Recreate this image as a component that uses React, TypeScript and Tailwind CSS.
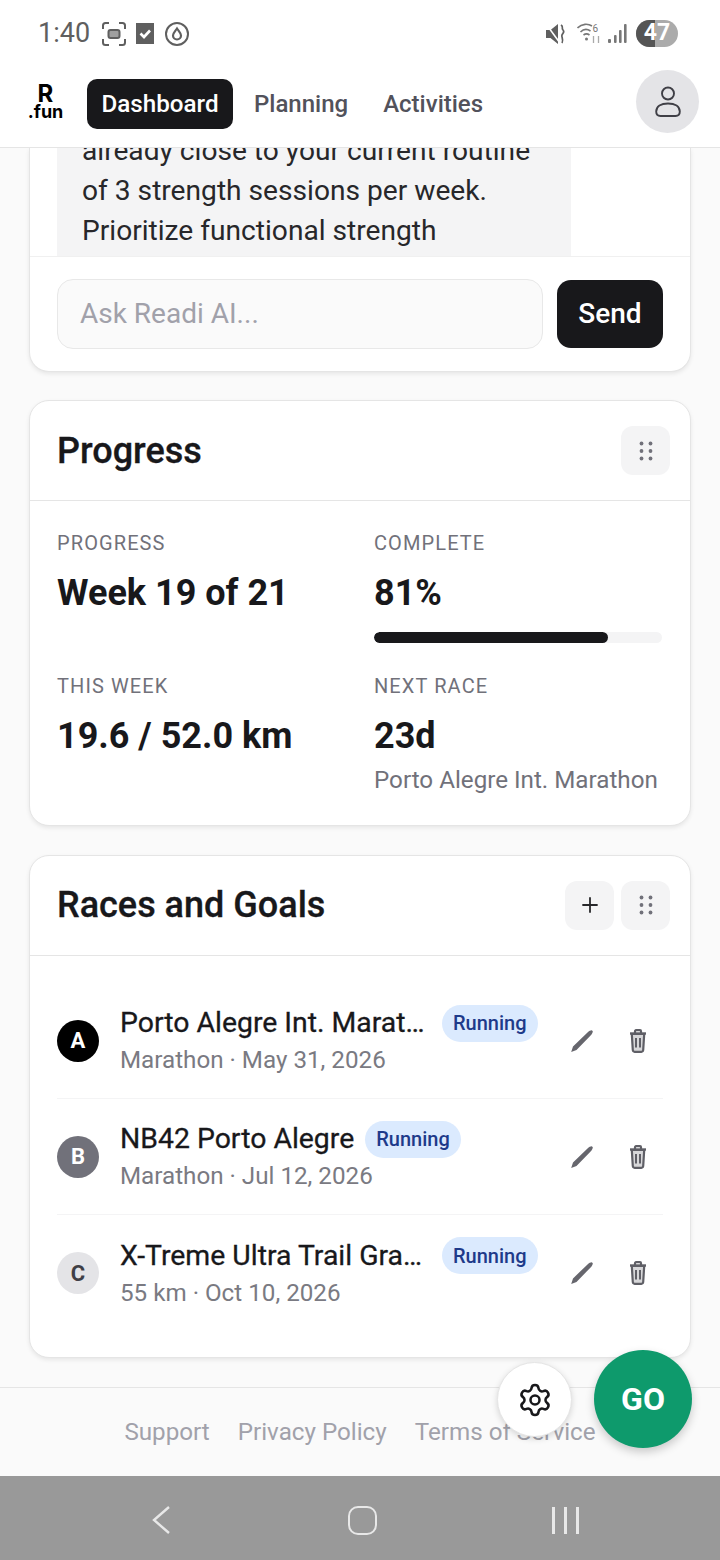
import React from "react";
import { Settings, Plus } from "lucide-react";

function Grip() {
  return (
    <svg width="14" height="20" viewBox="0 0 14 20" className="text-[#71717a]" fill="currentColor">
      <circle cx="2.5" cy="2.5" r="1.9" /><circle cx="11.5" cy="2.5" r="1.9" />
      <circle cx="2.5" cy="10" r="1.9" /><circle cx="11.5" cy="10" r="1.9" />
      <circle cx="2.5" cy="17.5" r="1.9" /><circle cx="11.5" cy="17.5" r="1.9" />
    </svg>
  );
}

function IconBox({ children }: { children: React.ReactNode }) {
  return <div className="w-[49px] h-[49px] rounded-[12px] bg-[#f4f4f5] flex items-center justify-center">{children}</div>;
}

function Pencil() {
  return (
    <svg width="24" height="24" viewBox="0 0 24 24" className="text-[#66666d]" fill="currentColor">
      <path d="M1.2 23 L3 17.5 L17.5 3.4 C19 2 20.5 1.2 21.8 1.2 L22.8 2.2 C22.8 3.6 22 5 20.6 6.4 L6.5 21 Z" />
    </svg>
  );
}

function Trash() {
  return (
    <svg width="18" height="24" viewBox="0 0 18 24" className="text-[#5f5f66]" fill="none" stroke="currentColor" strokeWidth="2.2">
      <path d="M1 4.5 H17" strokeWidth="2.4" />
      <path d="M6 4 V2.2 C6 1.6 6.5 1.2 7 1.2 H11 C11.5 1.2 12 1.6 12 2.2 V4" />
      <path d="M2.8 5 L3.8 21 C3.9 22 4.6 22.8 5.6 22.8 H12.4 C13.4 22.8 14.1 22 14.2 21 L15.2 5 Z" fill="currentColor" fillOpacity="0.25" />
      <path d="M7 9 V18.5 M11 9 V18.5" strokeWidth="2" />
    </svg>
  );
}

function Stat({ label, value, sub, bar }: { label: string; value: string; sub?: string; bar?: boolean }) {
  return (
    <div className="flex flex-col">
      <div className="text-[20px] leading-[28px] tracking-[1.1px] text-[#71717a]">{label}</div>
      <div className="mt-[11px] text-[36px] leading-[50px] font-bold text-[#18181b]">{value}</div>
      {bar && (
        <div className="mt-[14px] h-[11px] w-[288px] rounded-full bg-[#f4f4f5] overflow-hidden">
          <div className="h-full w-[234px] rounded-full bg-[#18181b]" />
        </div>
      )}
      {sub && <div className="mt-[3px] text-[24.2px] leading-[32px] text-[#71717a] whitespace-nowrap">{sub}</div>}
    </div>
  );
}

function Race({ letter, circle, name, sub, last }: { letter: string; circle: string; name: string; sub: string; last?: boolean }) {
  return (
    <div className={"h-[116px] flex items-center " + (last ? "" : "border-b border-[#f4f4f5]")}>
      <div className={"w-[42px] h-[42px] rounded-full flex items-center justify-center text-[22px] font-bold shrink-0 " + circle}>{letter}</div>
      <div className="ml-[21px] flex-1 min-w-0">
        <div className="flex items-center">
          <div className="max-w-[311px] text-[28.4px] leading-[38px] font-normal [-webkit-text-stroke:0.3px_#18181b] text-[#18181b] truncate">{name}</div>
          <div className="ml-[11px] h-[37px] px-[11px] rounded-full bg-[#dbeafe] text-[#1e3a8a] text-[20px] font-medium flex items-center shrink-0">Running</div>
        </div>
        <div className="mt-[1px] text-[24.2px] leading-[34px] text-[#7a7a82]">{sub}</div>
      </div>
      <div className="w-[24px] flex justify-center shrink-0 mr-[32px]"><Pencil /></div>
      <div className="w-[24px] flex justify-center shrink-0 mr-[13px]"><Trash /></div>
    </div>
  );
}

export default function App() {
  return (
    <div className="relative w-[720px] h-[1560px] overflow-hidden flex flex-col bg-[#fafafa] font-['Roboto',sans-serif]">
      {/* status bar */}
      <div className="h-[70px] shrink-0 bg-white flex items-start justify-between pt-[20px] pl-[38px] pr-[42px]">
        <div className="flex items-center h-[27px] text-[#5f5f5f]">
          <div className="text-[27px] leading-[27px] w-[64px]">1:40</div>
          <svg width="24" height="24" viewBox="0 0 24 24" fill="none" stroke="currentColor" strokeWidth="2">
            <path d="M1 7V3.5C1 2 2 1 3.5 1H7M17 1h3.5C22 1 23 2 23 3.5V7M23 17v3.5c0 1.5-1 2.5-2.5 2.5H17M7 23H3.5C2 23 1 22 1 20.5V17" />
            <rect x="6.5" y="8" width="11" height="8" rx="2" fill="currentColor" fillOpacity="0.6" />
          </svg>
          <svg className="ml-[10px]" width="18" height="22" viewBox="0 0 18 22">
            <rect width="18" height="21" fill="currentColor" />
            <path d="M4.5 10.5 L8 14 L14 7.5" stroke="#fff" strokeWidth="2.6" fill="none" />
          </svg>
          <svg className="ml-[11px]" width="24" height="24" viewBox="0 0 24 24" fill="none" stroke="currentColor" strokeWidth="2">
            <circle cx="12" cy="12" r="11" />
            <path d="M12 6.5 C14 9.5 16 11 16 13.5 A4 4 0 0 1 8 13.5 C8 11 10 9.5 12 6.5 Z" strokeWidth="2.2" />
          </svg>
        </div>
        <div className="flex items-center h-[27px] text-[#5f5f5f]">
          <svg width="20" height="20" viewBox="0 0 20 20" fill="currentColor">
            <path d="M0 6h4.5l7.5-6V20L4.5 14H0Z" />
            <path d="M0 0 L14 19" stroke="#fff" strokeWidth="1.6" />
            <path d="M15 1c3 2 0 3 2 5s0 3-1 5 2 4 0 8" fill="none" stroke="currentColor" strokeWidth="1.7" />
          </svg>
          <svg className="ml-[11px]" width="24" height="22" viewBox="0 0 24 22" fill="none" stroke="#777" strokeWidth="1.6">
            <path d="M0.5 5C5 0.5 11 0.5 15 3" />
            <path d="M3.5 9c3-3 7-3 10-1" />
            <path d="M6.5 12c2-1.5 4-1.5 6 0" />
            <circle cx="9.5" cy="16" r="1.5" fill="#777" stroke="none" />
            <text x="15.5" y="9" fontSize="10" fill="#777" stroke="none" fontFamily="Roboto">6</text>
            <path d="M16.5 13v7M21.5 13v7" stroke="#aaa" strokeWidth="1.3" />
          </svg>
          <svg className="ml-[7px]" width="20" height="20" viewBox="0 0 20 20" fill="#777">
            <rect x="0" y="15" width="3" height="4" rx="1" />
            <rect x="6" y="11" width="2.6" height="8" rx="1" />
            <rect x="11" y="6" width="2.6" height="13" rx="1" />
            <rect x="16" y="0" width="2.6" height="19" rx="1" />
          </svg>
          <div className="ml-[8px] relative w-[42px] h-[27px] rounded-full overflow-hidden flex bg-[#ababab]">
            <div className="w-[19px] h-full bg-[#555555]" />
            <div className="absolute inset-0 flex items-center justify-center text-white text-[23px] font-bold">47</div>
          </div>
        </div>
      </div>

      {/* header */}
      <div className="h-[78px] shrink-0 bg-white border-b border-[#e5e5e5] flex items-start pl-[28px] pr-[21px] relative z-10">
        <div className="w-[35px] mt-[13px] flex flex-col items-center text-black font-bold font-['Inter',sans-serif]">
          <div className="text-[24px] leading-[21px]">R</div>
          <div className="text-[18px] leading-[15px] whitespace-nowrap">.fun</div>
        </div>
        <div className="ml-[24px] mt-[9px] h-[50px] w-[146px] rounded-[10px] bg-[#18181b] text-white text-[24.2px] font-medium flex items-center justify-center">Dashboard</div>
        <div className="ml-[21px] mt-[9px] h-[50px] text-[24px] font-medium text-[#52525b] flex items-center">Planning</div>
        <div className="ml-[35px] mt-[9px] h-[50px] text-[24px] font-medium text-[#52525b] flex items-center">Activities</div>
        <div className="ml-auto w-[63px] h-[63px] rounded-full bg-[#e4e4e7] flex items-center justify-center text-[#3f3f46]">
          <svg width="26" height="32" viewBox="0 0 26 32" fill="none" stroke="currentColor" strokeWidth="1.9">
            <circle cx="13" cy="7.5" r="6" />
            <path d="M1.2 25.5 C1.2 20.5 6 17.5 13 17.5 C20 17.5 24.8 20.5 24.8 25.5 C24.8 28.5 23 30 20.5 30 H5.5 C3 30 1.2 28.5 1.2 25.5 Z" />
          </svg>
        </div>
      </div>

      {/* main */}
      <div className="flex-1 min-h-0 px-[29px] flex flex-col">
        {/* chat */}
        <div className="bg-white border-x border-b border-[#e5e5e5] rounded-b-[20px] shadow-[0_2px_4px_rgba(0,0,0,0.08)] shrink-0">
          <div className="h-[109px] overflow-hidden flex flex-col justify-end px-[27px] border-b border-[#f0f0f0]">
            <div className="w-[514px] shrink-0 bg-[#f4f4f5] px-[25px] pb-[5px] text-[28.15px] leading-[40px] text-[#27272a] whitespace-nowrap">
              already close to your current routine
              <br />of 3 strength sessions per week.
              <br />Prioritize functional strength
            </div>
          </div>
          <div className="h-[114px] flex items-start px-[27px] pt-[22px]">
            <div className="w-[486px] h-[70px] rounded-[16px] border border-[#e8e8e8] bg-[#fafafa] flex items-center pl-[22px] text-[28px] text-[#a1a1aa]">Ask Readi AI...</div>
            <div className="ml-[14px] mt-[1px] w-[106px] h-[68px] rounded-[14px] bg-[#18181b] text-white text-[28px] font-medium flex items-center justify-center">Send</div>
          </div>
        </div>

        {/* progress */}
        <div className="mt-[28px] h-[426px] bg-white border border-[#e5e5e5] rounded-[20px] shadow-[0_2px_4px_rgba(0,0,0,0.08)] shrink-0">
          <div className="h-[100px] border-b border-[#e5e5e5] flex items-center justify-between pl-[27px] pr-[20px]">
            <div className="text-[36px] font-medium [-webkit-text-stroke:0.3px_#18181b] text-[#18181b]">Progress</div>
            <IconBox><Grip /></IconBox>
          </div>
          <div className="grid grid-cols-[317px_1fr] pl-[27px] pr-[27px] pt-[28px]">
            <Stat label="PROGRESS" value="Week 19 of 21" />
            <Stat label="COMPLETE" value="81%" bar />
            <div className="mt-[29px]"><Stat label="THIS WEEK" value="19.6 / 52.0 km" /></div>
            <div className="mt-[29px]"><Stat label="NEXT RACE" value="23d" sub="Porto Alegre Int. Marathon" /></div>
          </div>
        </div>

        {/* races */}
        <div className="mt-[29px] h-[503px] bg-white border border-[#e5e5e5] rounded-[20px] shadow-[0_2px_4px_rgba(0,0,0,0.08)] shrink-0">
          <div className="h-[100px] border-b border-[#e5e5e5] flex items-center justify-between pl-[27px] pr-[20px] pb-[1px]">
            <div className="text-[36px] font-medium [-webkit-text-stroke:0.3px_#18181b] text-[#18181b]">Races and Goals</div>
            <div className="flex gap-[7px]">
              <IconBox><Plus size={24} strokeWidth={1.8} className="text-[#27272a]" /></IconBox>
              <IconBox><Grip /></IconBox>
            </div>
          </div>
          <div className="px-[27px] pt-[27px]">
            <Race letter="A" circle="bg-black text-white" name="Porto Alegre Int. Marathon" sub="Marathon · May 31, 2026" />
            <Race letter="B" circle="bg-[#71717a] text-white" name="NB42 Porto Alegre" sub="Marathon · Jul 12, 2026" />
            <Race letter="C" circle="bg-[#e4e4e7] text-[#3f3f46]" name="X-Treme Ultra Trail Gramado" sub="55 km · Oct 10, 2026" last />
          </div>
        </div>

        {/* footer */}
        <div className="-mx-[29px] mt-[29px] flex-1 border-t border-[#e5e5e5] flex items-start justify-center gap-[28px] pt-[28px] text-[24.2px] leading-[32px] text-[#a1a1aa]">
          <span>Support</span><span>Privacy Policy</span><span>Terms of Service</span>
        </div>
      </div>

      {/* nav bar */}
      <div className="h-[84px] shrink-0 bg-[#999999] flex items-center pl-[151px] pt-[4px] text-[#e8e8e8]">
        <svg width="20" height="30" viewBox="0 0 20 30" fill="none" stroke="currentColor" strokeWidth="2.4"><path d="M18 2 L3 15 L18 28" /></svg>
        <div className="ml-[177px] w-[29px] h-[29px] rounded-[10px] border-[2.5px] border-[#e8e8e8]" />
        <div className="ml-[175px] flex gap-[9px]">
          <div className="w-[3px] h-[27px] bg-[#e8e8e8]" />
          <div className="w-[3px] h-[27px] bg-[#e8e8e8]" />
          <div className="w-[3px] h-[27px] bg-[#e8e8e8]" />
        </div>
      </div>

      {/* floating buttons */}
      <div className="absolute left-[497px] top-[1362px] w-[75px] h-[75px] rounded-full bg-white border border-[#e5e5e5] shadow-[0_2px_6px_rgba(0,0,0,0.15)] flex items-center justify-center text-[#18181b]">
        <Settings size={36} strokeWidth={1.7} />
      </div>
      <div className="absolute left-[594px] top-[1350px] w-[98px] h-[98px] rounded-full bg-[#0e9a6c] shadow-[0_4px_10px_rgba(0,0,0,0.2)] flex items-center justify-center text-white text-[32px] font-bold">GO</div>
    </div>
  );
}
